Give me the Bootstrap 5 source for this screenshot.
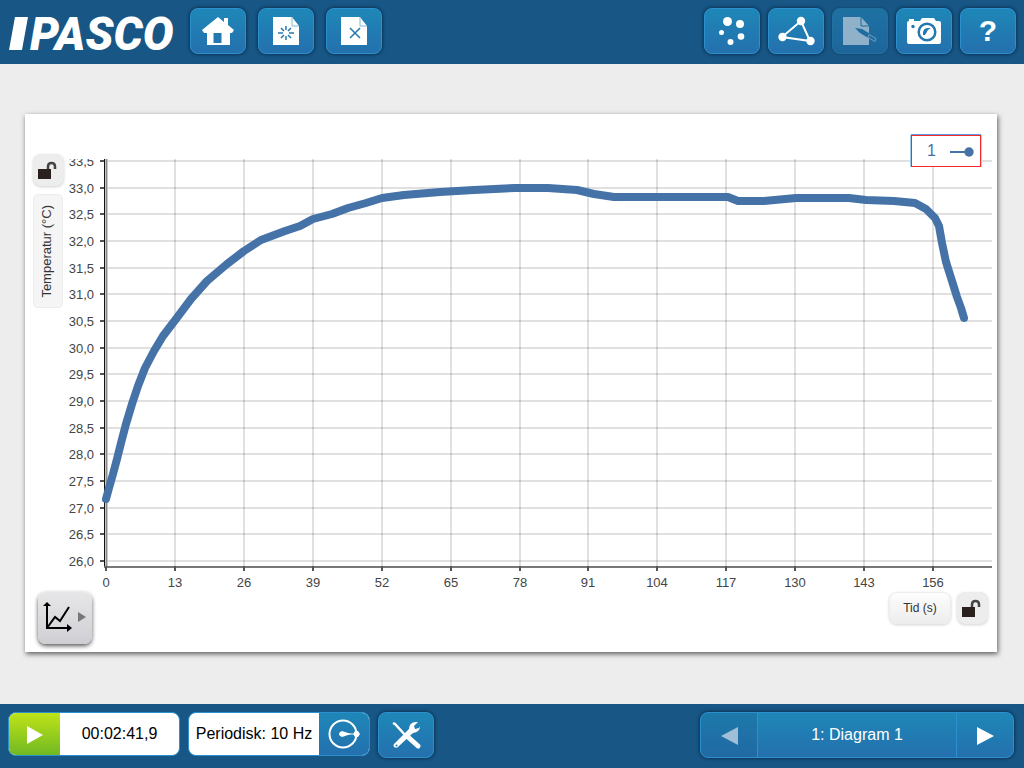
<!DOCTYPE html>
<html lang="da">
<head>
<meta charset="utf-8">
<meta name="viewport" content="width=device-width, initial-scale=1">
<title>PASCO – Diagram 1</title>
<link rel="stylesheet" href="https://cdn.jsdelivr.net/npm/bootstrap@5.3.0/dist/css/bootstrap.min.css">
<style>
body { font-family: "Liberation Sans", Arial, sans-serif; background: #ededed; color: #111; }
.bar { background: #175685; height: 64px; }
.brand-mark { width: 174px; height: 48px; overflow: visible; }
.brand-mark text { font: italic 900 46px Roboto, "Liberation Sans", sans-serif; fill: #fff; }
.tool, .pager { background: linear-gradient(#1e87b7, #2470ae); border: 1px solid #2b90cc; border-radius: 8px; box-shadow: 0 0 3px 1px #0d3555; color: #fff; }
.tool { width: 56px; height: 46px; padding: 0; display: flex; align-items: center; justify-content: center; }
.tool:hover, .tool:disabled { color: #fff; border-color: #2b90cc; }
.tool:disabled { opacity: 1; background: linear-gradient(#1d72a2, #1e659c); border-color: #22709f; box-shadow: 0 0 2px #0d3555; }
.files { gap: 12px; margin-left: 8px; }
.help-sign { font-size: 30px; font-weight: 700; line-height: 32px; }
.page-bar { padding: 8px 10px 8px 8px; }
.pager { width: 314px; height: 46px; overflow: hidden; }
.pager .btn { color: #fff; font-size: 16px; padding: 0; border: 0; border-radius: 0; line-height: 24px; }
.pager .step { width: 56px; }
.pager .step:disabled { background: #1a5c9055; opacity: 1; }
.pager .page-name { border: solid #2b90cc; border-width: 0 1px; }
.control { height: 44px; border: 1px solid #2b90cc; border-radius: 8px; overflow: hidden; background: #fff; font-size: 16px; color: #000; }
.control .btn { padding: 0; border: 0; border-radius: 0; }
.recorder { width: 172px; }
.rate { width: 182px; }
.record-btn { width: 51px; background: linear-gradient(#bfe318, #70b923); }
.rate-btn { width: 50px; background: linear-gradient(#1e87b7, #2470ae); }
.stage { padding: 50px 27px 52px 25px; }
.sheet { background: #fff; box-shadow: 1px 2px 5px #0000009c; padding: 20px 5px 8px 8px; }
.side { width: 31px; padding-top: 20px; }
.plot-wrap { min-width: 0; }
.soft { border: 1px solid #ececec; border-radius: 8px; background: linear-gradient(#fdfdfd, #ededed); box-shadow: 0 1px 3px #0000002e; color: #333; padding: 0; font-size: 12px; }
.lock-btn { width: 31px; height: 32px; padding-right: 3px; background: #ededed; display: flex; align-items: center; justify-content: center; }
.y-name { width: 30px; height: 114px; padding-right: 3px; font-size: 13px; border-radius: 5px; background: #f5f5f5; box-shadow: none; display: flex; align-items: center; justify-content: center; }
.y-name span { writing-mode: vertical-rl; transform: rotate(180deg); white-space: nowrap; }
.x-name { width: 62px; height: 32px; margin-right: 2px; }
.chart-btn { width: 54px; height: 52px; margin-left: 5px; padding: 0; border: 0; border-radius: 8px; background: linear-gradient(#e7e7e8, #cfced3); box-shadow: 0 2px 4px #000000a6; display: flex; align-items: center; justify-content: center; }
.plot text { font-size: 13px; fill: #444; }
.series-key { top: 21px; right: 16px; width: 70px; height: 32px; border: 1px solid #f42a31; box-shadow: 0 -1px #5d9fdc, -1px 0 #9cc9ec, 1px 0 #b9d5ee; color: #4572a7; background: #fff; font-size: 16px; line-height: 30px; padding: 0 6px 0 15px; }
</style>
</head>
<body>
<svg class="d-none" xmlns="http://www.w3.org/2000/svg">
  <symbol id="lock" viewBox="0 0 20 20"><path d="M1 9h13v10H1z" fill="#2a211e"/><path d="M11 9V6.500Q11 3 14.500 3T18 6.500V9" fill="none" stroke="#444" stroke-width="2.500"/></symbol>
  <symbol id="sheetIcon" viewBox="0 0 28 30"><path d="M1 1h19l7 9v19H1z" fill="#fff"/><path d="M20 1v9h7" fill="none" stroke="#7fb8d6"/></symbol>
</svg>
<div class="d-flex flex-column min-vh-100">
  <header class="bar d-flex align-items-start justify-content-between p-2">
    <div class="d-flex">
      <svg class="brand-mark" viewBox="0 0 174 48" role="img" aria-label="PASCO"><path d="M7 9H20L14 42H1z" fill="#fff"/><text x="22" y="42">PASCO</text></svg>
      <div class="files d-flex">
        <button class="btn tool" aria-label="Hjem"><svg width="34" height="30" viewBox="0 0 34 30"><path d="M17 1 23 6V2h4v7l6 5-2 3h-2v12H6V17H3l-2-3z" fill="#fff"/><path d="M12.500 17h8v10h-8z" fill="#2478b0"/></svg></button>
        <button class="btn tool" aria-label="Ny side"><svg width="28" height="30" viewBox="0 0 28 30"><use href="#sheetIcon"/><path d="M14 10v4m0 6v4M6 17h5m6 0h5M9 12l3 3m4 4 3 3M19 12l-3 3m-4 4-3 3" stroke="#2478b0" stroke-width="1.500"/></svg></button>
        <button class="btn tool" aria-label="Slet side"><svg width="28" height="30" viewBox="0 0 28 30"><use href="#sheetIcon"/><path d="m10 12 10 10M20 12 10 22" stroke="#2478b0" stroke-width="1.500"/></svg></button>
      </div>
    </div>
    <div class="d-flex gap-2">
      <button class="btn tool" aria-label="Sensorer"><svg width="28" height="30" viewBox="0 0 28 30" fill="#fff"><circle cx="9.500" cy="5.500" r="4.500"/><circle cx="22" cy="8" r="4"/><circle cx="3.500" cy="16.500" r="2.500"/><circle cx="23" cy="20.500" r="3.300"/><circle cx="12.500" cy="26" r="3"/></svg></button>
      <button class="btn tool" aria-label="Del"><svg width="38" height="32" viewBox="0 0 38 32"><path d="M24 6 5 22 33 26z" fill="none" stroke="#fff" stroke-width="2"/><g fill="#fff"><circle cx="24" cy="6" r="4.200"/><circle cx="5.500" cy="22" r="4.200"/><circle cx="33.500" cy="26" r="4.200"/></g></svg></button>
      <button class="btn tool" disabled aria-label="Journal"><svg width="38" height="30" viewBox="0 0 38 30"><path d="M2 1h18l8 9v19H2z" fill="#8fb2ca"/><path d="M20 1v9h8" fill="none" stroke="#1e6b9f"/><path d="m14 12 7 1 15 9-2 4-15-9z" fill="#1e6b9f"/><path d="m28 18.500 7 4-1 3-7-4z" fill="none" stroke="#8fb2ca" stroke-width=".7"/></svg></button>
      <button class="btn tool" aria-label="Kamera"><svg width="36" height="28" viewBox="0 0 36 28"><path d="M3 4V2h5v2h6l2-3h12l2 3h3q2 0 2 2v19q0 2-2 2H3q-2 0-2-2V6q0-2 2-2z" fill="#fff"/><circle cx="7" cy="9.500" r="1.700" fill="#2478b0"/><circle cx="21" cy="15" r="8.300" fill="none" stroke="#2478b0" stroke-width="2.500"/><path d="M17 18v-3q1-4 5-4h3q-4 2-4 4l-2 3z" fill="#2478b0"/></svg></button>
      <button class="btn tool help-sign" aria-label="Hjælp">?</button>
    </div>
  </header>

  <main class="stage flex-grow-1">
    <section class="sheet position-relative" aria-label="Diagram 1">
      <div class="d-flex">
        <div class="side flex-shrink-0 d-flex flex-column">
          <button class="btn soft lock-btn mb-2" aria-label="Lås y-akse"><svg width="20" height="20"><use href="#lock"/></svg></button>
          <button class="btn soft y-name"><span>Temperatur (°C)</span></button>
        </div>
        <div class="plot-wrap flex-grow-1">
          <svg class="plot d-block w-100" viewBox="64 134 928 458" role="img" aria-label="Temperatur over tid">
            <clipPath id="plotTop"><rect x="64" y="159" width="928" height="430"/></clipPath>
            <g clip-path="url(#plotTop)">
              <g id="grid" stroke="#000" stroke-opacity=".12" stroke-width="2"></g>
              <g id="yTicks" text-anchor="end"></g>
              <path d="M106.500 159V568" stroke="#8f8c8c" stroke-width="2"/><path d="M104.500 159V568" stroke="#111" stroke-width="1"/>
              <path d="M104 567H992" stroke="#777" stroke-width="2"/>
              <g id="xTicks" text-anchor="middle"></g>
            </g>
            <path d="M106 499 109 488 113 474 117 459 121 443 126 424 132 404 138 386 145 368 154 351 163 336 176 319 191 299 207 281 227 264 244 251 261 240 285 231 300 226 313 219 332 214 348 208 366 203 382 198 404 195 440 192 474 190 515 188 548 188 577 190 594 194 614 197 728 197 738 201 764 201 796 198 849 198 866 200 894 201 915 203 926 209 935 218 939 226 942 243 946 262 952 281 957 297 961 308 964 318" fill="none" stroke="#4572a7" stroke-width="8" stroke-linecap="round" stroke-linejoin="round"/>
          </svg>
        </div>
      </div>
      <div class="d-flex align-items-start pe-1">
        <button class="btn chart-btn" aria-label="Diagramværktøjer"><svg width="44" height="34" viewBox="0 0 44 34"><path d="M4 4v23h24M4 27l8-11 5 4 9-14" fill="none" stroke="#000" stroke-width="2"/><path d="m0 5 4-4 4 4zM24 23l5 4-5 4z"/><path d="m35 11 8 5-8 5z" fill="#777"/></svg></button>
        <button class="btn soft x-name ms-auto">Tid (s)</button>
        <button class="btn soft lock-btn ms-1" aria-label="Lås x-akse"><svg width="20" height="20"><use href="#lock"/></svg></button>
      </div>
      <div class="series-key position-absolute d-flex align-items-center justify-content-between"><span>1</span><svg width="24" height="12" viewBox="0 0 24 12"><path d="M0 7h18" stroke="#4572a7" stroke-width="2"/><circle cx="19" cy="7" r="4.700" fill="#4572a7"/></svg></div>
    </section>
  </main>

  <footer class="bar page-bar d-flex align-items-start justify-content-between">
    <div class="d-flex gap-2">
      <div class="control recorder d-flex">
        <button class="btn record-btn" aria-label="Start"><svg width="16" height="18" viewBox="0 0 16 18"><path d="m0 0 16 9-16 9z" fill="#fff"/></svg></button>
        <output class="flex-grow-1 d-flex align-items-center justify-content-center p-0">00:02:41,9</output>
      </div>
      <div class="control rate d-flex">
        <span class="flex-grow-1 d-flex align-items-center justify-content-center text-nowrap">Periodisk: 10 Hz</span>
        <button class="btn rate-btn" aria-label="Samplingsindstillinger"><svg width="32" height="30" viewBox="0 0 32 30"><circle cx="15" cy="15" r="13.500" fill="none" stroke="#fff" stroke-width="2"/><path d="M14 12q-3 1-3 3t3 3l9-3z" fill="#fff"/><path d="M11 15h14" stroke="#fff"/><path d="m25 15 2-3h3l2 3-2 3h-3z" fill="#fff"/></svg></button>
      </div>
      <button class="btn tool" aria-label="Værktøj"><svg width="30" height="28" viewBox="0 0 30 28"><path d="m2 2 2 1 11 12" fill="none" stroke="#fff" stroke-width="2.500"/><path d="m17 16 10 9" stroke="#fff" stroke-width="5" stroke-linecap="round"/><path d="M3 23 18 8q0-6 6-7l3 0-4 4 1 3 4-1 1-2q0 6-7 7L8 25q-2 3-5 1-1-2 0-3z" fill="#fff"/><circle cx="5.500" cy="24.500" r="1" fill="#2478b0"/></svg></button>
    </div>
    <nav class="pager d-flex" aria-label="Sider">
      <button class="btn step" disabled aria-label="Forrige"><svg width="17" height="18" viewBox="0 0 17 18"><path d="M17 0v18L0 9z" fill="#a0bfd6"/></svg></button>
      <button class="btn page-name flex-grow-1">1: Diagram 1</button>
      <button class="btn step" aria-label="Næste"><svg width="17" height="18" viewBox="0 0 17 18"><path d="m0 0 17 9-17 9z" fill="#fff"/></svg></button>
    </nav>
  </footer>
</div>
<script src="https://cdn.jsdelivr.net/npm/bootstrap@5.3.0/dist/js/bootstrap.bundle.min.js"></script>
<script>
// Gridlines, tick marks and tick labels for both axes
let grid = "", yTicks = "", xTicks = "";
for (let i = 0; i <= 15; i++) {
  const y = Math.round(161 + i * 400 / 15);
  grid += `<path d="M108 ${y}H992"/>`;
  yTicks += `<path d="M100 ${y}h5" stroke="#555" stroke-width="2"/><text x="94" y="${y + 5}">${(33.5 - i / 2).toFixed(1).replace(".", ",")}</text>`;
}
for (let i = 0; i <= 12; i++) {
  const x = Math.round(106 + i * 827 / 12);
  if (i) grid += `<path d="M${x} 159V567"/>`;
  xTicks += `<path d="M${x} 566v5" stroke="#555" stroke-width="2"/><text x="${x}" y="587">${i * 13}</text>`;
}
document.getElementById("grid").innerHTML = grid;
document.getElementById("yTicks").innerHTML = yTicks;
document.getElementById("xTicks").innerHTML = xTicks;
</script>
</body>
</html>
